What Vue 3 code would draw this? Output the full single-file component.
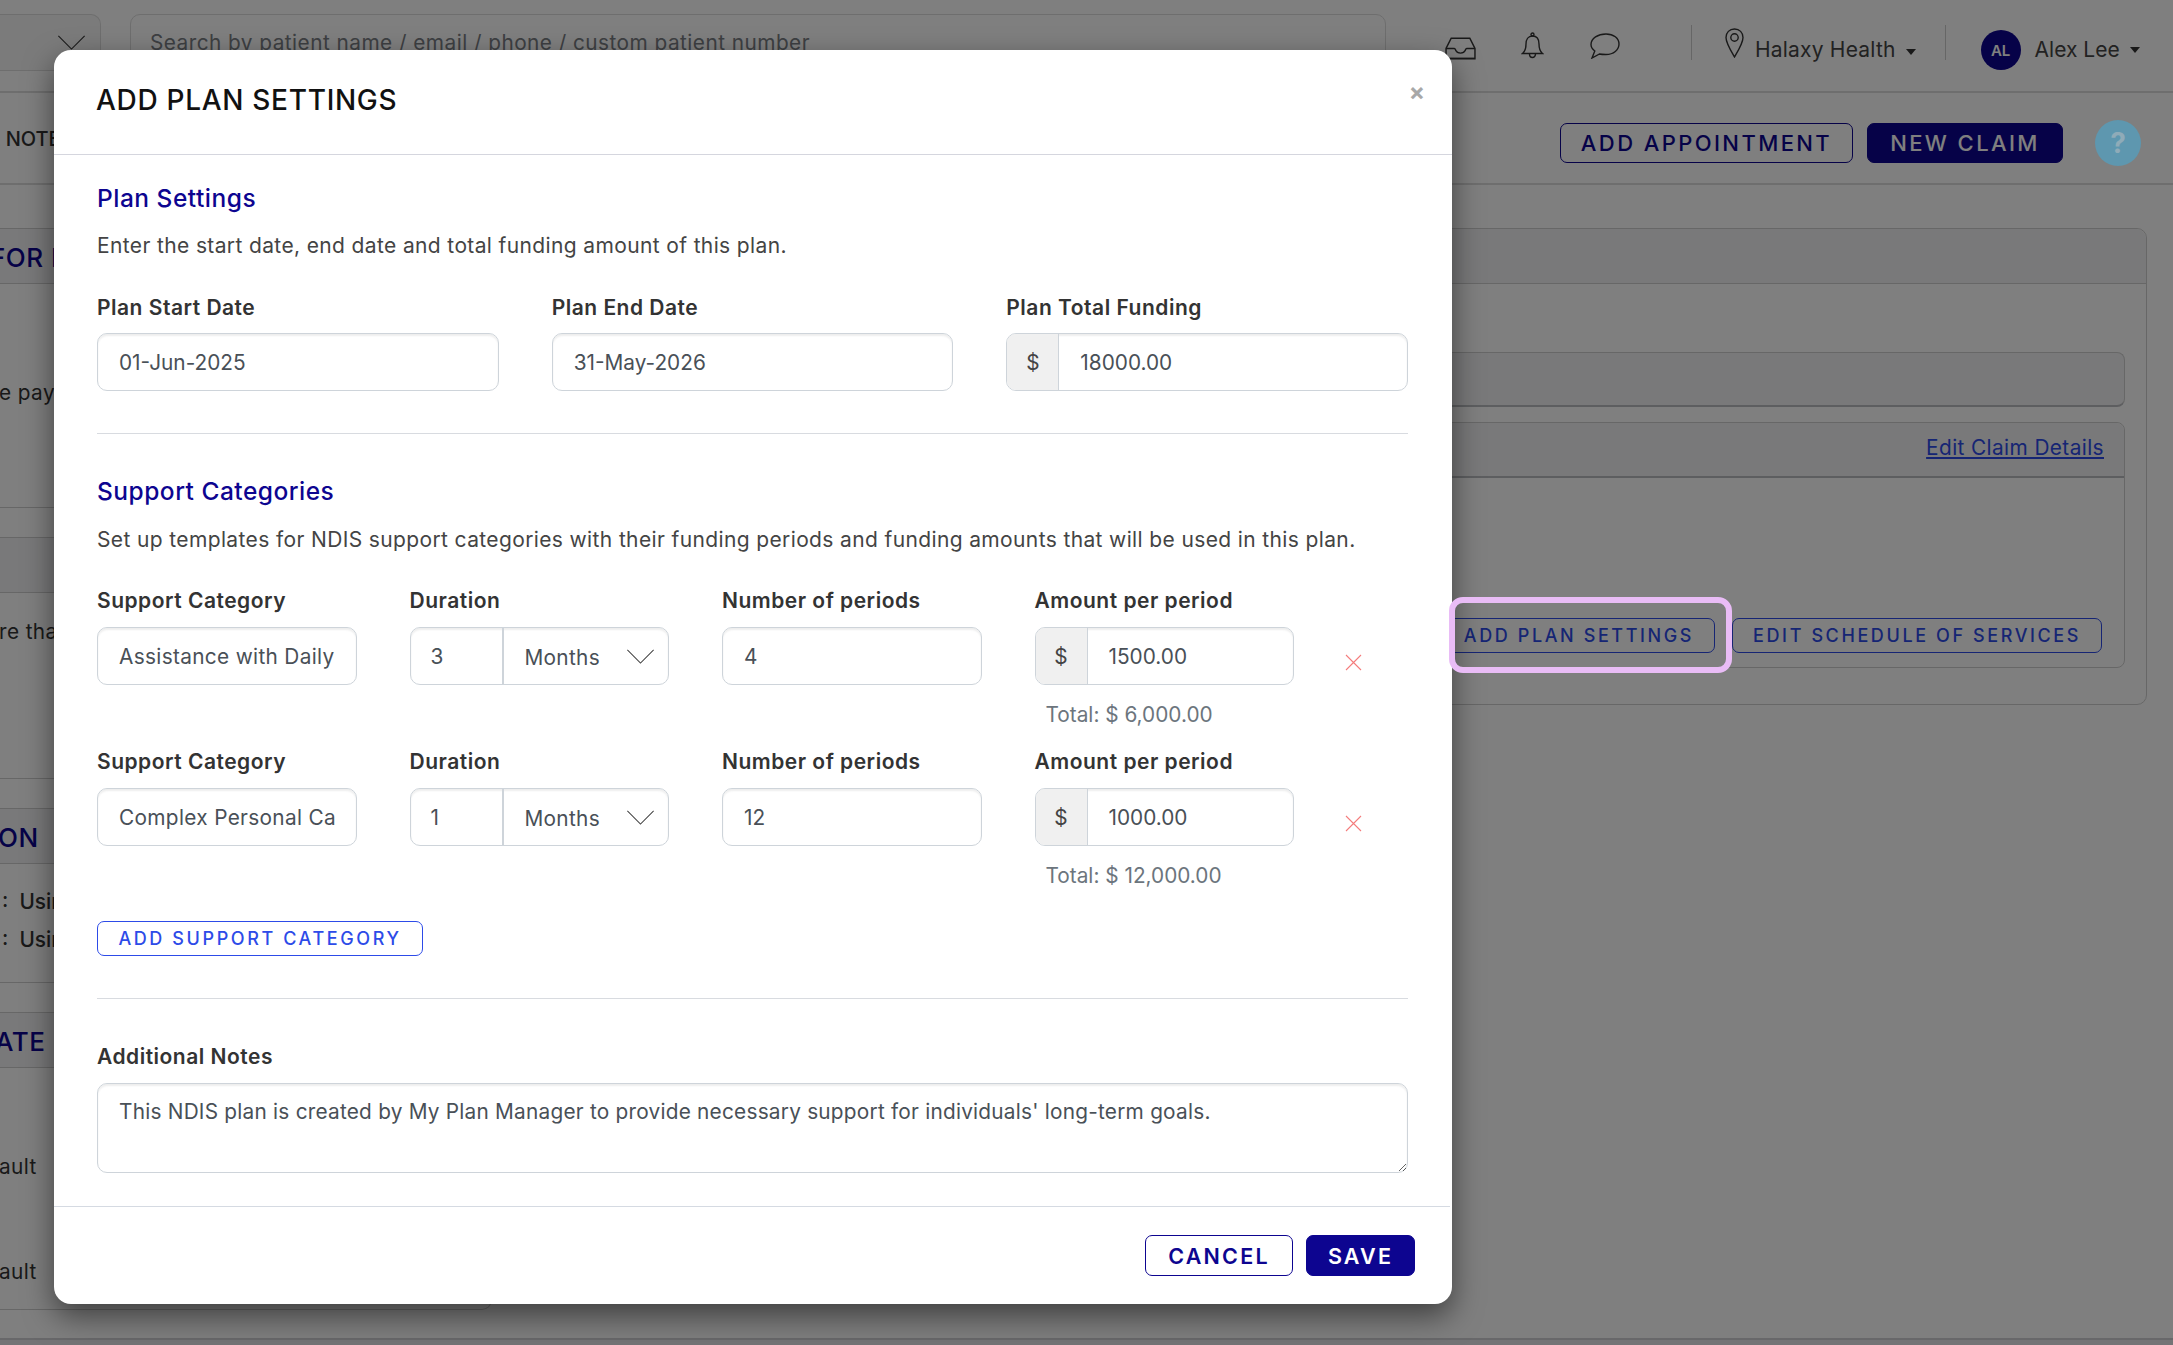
<script setup>
const dates = [
  { label: 'Plan Start Date', value: '01-Jun-2025' },
  { label: 'Plan End Date', value: '31-May-2026' }
]

const categories = [
  { name: 'Assistance with Daily', every: '3', periods: '4', amount: '1500.00', total: '6,000.00' },
  { name: 'Complex Personal Ca', every: '1', periods: '12', amount: '1000.00', total: '12,000.00' }
]
</script>

<template>
  <div class="page">
    <header class="topbar">
      <div class="menu-box">
        <svg class="chevron" viewBox="0 0 30 16"><path d="M1 1l14 14L29 1" /></svg>
      </div>
      <div class="search">Search by patient name / email / phone / custom patient number</div>
      <div class="top-icons">
        <svg class="ic-inbox" viewBox="0 0 30 22">
          <path d="M6 1h18l5 10v10H1V11z" />
          <path d="M1 11h8c1 0 1 1 1.500 2 .6 1.400 2.500 2.500 4.500 2.500s3.900-1.100 4.500-2.500c.5-1 .5-2 1.500-2h8" />
          <path d="M1 20.500h28" />
        </svg>
        <svg class="ic-bell" viewBox="0 0 22 27">
          <circle cx="11" cy="2.500" r="1.500" />
          <path d="M11 4C6.500 4 4.500 7.500 4.500 12c0 5-1 7.500-3.500 9.500h20c-2.500-2-3.500-4.500-3.500-9.500C17.500 7.500 15.500 4 11 4z" />
          <path d="M8 22a3 3.500 0 0 0 6 0" />
        </svg>
        <svg class="ic-chat" viewBox="0 0 30 26">
          <path d="M16 1C8 1 1 5 1 11.500c0 3 1.700 5 3.800 6.500L2 25l7.500-4c2 .5 4 .5 6.500.5 7.500 0 13-4.500 13-10.500S23.500 1 16 1z" />
        </svg>
      </div>
      <div class="top-sep"></div>
      <div class="clinic">
        <svg class="ic-pin" viewBox="0 0 19 30">
          <path d="M9.500 1C4.500 1 1 4.500 1 9.500 1 15 6 23 9.500 29 13 23 18 15 18 9.500 18 4.500 14.500 1 9.500 1z" />
          <circle cx="9.500" cy="9.500" r="3.700" />
        </svg>
        <span class="top-name">Halaxy Health</span>
        <span class="caret"></span>
      </div>
      <div class="top-sep second"></div>
      <div class="user">
        <span class="avatar">AL</span>
        <span class="top-name">Alex Lee</span>
        <span class="caret"></span>
      </div>
    </header>

    <nav class="subbar">
      <span class="tab-text">L NOTES</span>
      <div class="sub-actions">
        <button class="btn-big outline">ADD APPOINTMENT</button>
        <button class="btn-big solid">NEW CLAIM</button>
        <span class="help">?</span>
      </div>
    </nav>

    <div class="content">
      <aside class="left-col">
        <section class="side-card card-a">
          <h3 class="cut-f">FOR INVOICES</h3>
          <p class="para para-a">e payment</p>
        </section>
        <section class="side-card card-b">
          <h3></h3>
          <p class="para para-b">re that</p>
        </section>
        <section class="side-card card-c">
          <h3 class="cut-o">ON</h3>
          <p class="uses first">:&nbsp; Using</p>
          <p class="uses">:&nbsp; Using</p>
        </section>
        <section class="side-card card-d">
          <h3 class="cut-a">ATE PLAN</h3>
          <p class="para para-d">ault</p>
          <p class="para para-d2">ault</p>
        </section>
      </aside>

      <main class="right-card">
        <div class="right-head"></div>
        <div class="panel panel-one"></div>
        <div class="panel panel-two">
          <div class="panel-head">
            <a class="edit-link">Edit Claim Details</a>
          </div>
          <div class="panel-body">
            <button class="btn-small">ADD PLAN SETTINGS</button>
            <button class="btn-small">EDIT SCHEDULE OF SERVICES</button>
          </div>
        </div>
      </main>
    </div>

    <div class="bottom-band"></div>

    <div class="backdrop"></div>

    <div class="modal">
      <div class="modal-head">
        <h2>ADD PLAN SETTINGS</h2>
        <span class="close">×</span>
      </div>

      <div class="modal-body">
        <h4>Plan Settings</h4>
        <p class="desc">Enter the start date, end date and total funding amount of this plan.</p>

        <div class="plan-grid">
          <div v-for="d in dates" :key="d.label">
            <label>{{ d.label }}</label>
            <div class="field">{{ d.value }}</div>
          </div>
          <div>
            <label>Plan Total Funding</label>
            <div class="field group">
              <span class="addon">$</span>
              <span class="group-value">18000.00</span>
            </div>
          </div>
        </div>

        <hr class="rule" />

        <h4>Support Categories</h4>
        <p class="desc">Set up templates for NDIS support categories with their funding periods and funding amounts that will be used in this plan.</p>

        <div v-for="c in categories" :key="c.name" class="cat-row">
          <div>
            <label>Support Category</label>
            <div class="field cat-name">{{ c.name }}</div>
          </div>
          <div>
            <label>Duration</label>
            <div class="field group">
              <span class="duration-num">{{ c.every }}</span>
              <span class="duration-unit">Months</span>
              <svg class="chevron small" viewBox="0 0 30 16"><path d="M1 1l14 14L29 1" /></svg>
            </div>
          </div>
          <div>
            <label>Number of periods</label>
            <div class="field">{{ c.periods }}</div>
          </div>
          <div>
            <label>Amount per period</label>
            <div class="field group">
              <span class="addon">$</span>
              <span class="group-value">{{ c.amount }}</span>
            </div>
            <div class="total">Total: $ {{ c.total }}</div>
          </div>
          <svg class="remove" viewBox="0 0 17 17"><path d="M1 1l15 15M16 1L1 16" /></svg>
        </div>

        <button class="btn-add">ADD SUPPORT CATEGORY</button>

        <hr class="rule second" />

        <label>Additional Notes</label>
        <div class="notes">This NDIS plan is created by My Plan Manager to provide necessary support for individuals' long-term goals.</div>
      </div>

      <div class="modal-foot">
        <button class="btn-cancel">CANCEL</button>
        <button class="btn-save">SAVE</button>
      </div>
    </div>

    <div class="spotlight"></div>
  </div>
</template>

<style scoped>
.page {
  position: relative;
  width: 2173px;
  height: 1345px;
  overflow: hidden;
  background: #fff;
  font-family: Inter, "Liberation Sans", sans-serif;
  font-size: 20.8px;
  color: #444;
}

button {
  font-family: inherit;
  cursor: pointer;
}

/* top bar */
.topbar {
  display: flex;
  align-items: flex-start;
  height: 93px;
  border-bottom: 2px solid #dcdcdc;
  box-sizing: border-box;
}

.menu-box {
  display: flex;
  justify-content: flex-end;
  align-items: center;
  box-sizing: border-box;
  width: 101px;
  height: 57px;
  margin-top: 14px;
  padding: 0 14px 0 0;
  border: 1px solid #dcdcdc;
  border-left: 0;
  border-radius: 0 10px 10px 0;
  background: #f6f6f6;
}

.chevron {
  width: 29px;
  height: 15px;
  fill: none;
  stroke: #333;
  stroke-width: 1.2;
}

.search {
  box-sizing: border-box;
  width: 1256px;
  height: 57px;
  margin: 14px 0 0 29px;
  padding: 13px 19px;
  border: 1px solid #dcdcdc;
  border-radius: 10px;
  line-height: 30px;
  letter-spacing: 0.46px;
  color: #7b7f85;
}

.top-icons {
  display: flex;
  align-items: center;
  height: 27px;
  margin: 32px 0 0 59px;
}

.top-icons svg,
.ic-pin {
  fill: none;
  stroke: #333;
  stroke-width: 1.4;
}

.ic-inbox {
  width: 31px;
  height: 23px;
  margin-top: 5px;
}

.ic-bell {
  width: 23px;
  height: 27px;
  margin-left: 45px;
}

.ic-chat {
  width: 30px;
  height: 26px;
  margin-left: 46px;
}

.top-sep {
  width: 1px;
  height: 35px;
  margin: 25px 0 0 71px;
  background: #ccc;
}

.top-sep.second {
  margin-left: 29px;
}

.clinic {
  display: flex;
  align-items: flex-end;
  margin: 28px 0 0 33px;
}

.ic-pin {
  width: 19px;
  height: 30px;
}

.top-name {
  margin-left: 11px;
  font-size: 21px;
  line-height: 34px;
  letter-spacing: 0.2px;
  color: #444;
}

.clinic .top-name {
  margin-bottom: -9px;
}

.caret {
  align-self: center;
  width: 0;
  height: 0;
  margin-left: 10px;
  border: 5px solid transparent;
  border-top: 6px solid #333;
  border-bottom: 0;
}

.clinic .caret {
  align-self: flex-end;
  margin-bottom: 3px;
}

.user {
  display: flex;
  align-items: center;
  height: 40px;
  margin: 30px 0 0 35px;
}

.avatar {
  display: flex;
  align-items: center;
  justify-content: center;
  width: 40px;
  height: 40px;
  border-radius: 50%;
  background: #0d0590;
  color: #fff;
  font-size: 15px;
  font-weight: 600;
}

.user .top-name {
  margin-left: 14px;
  letter-spacing: 0;
}

/* sub bar */
.subbar {
  display: flex;
  justify-content: space-between;
  align-items: flex-start;
  box-sizing: border-box;
  height: 92px;
  padding-right: 32px;
  border-bottom: 2px solid #dcdcdc;
}

.tab-text {
  margin: 31px 0 0 -11px;
  line-height: 30px;
  font-size: 20px;
  font-weight: 500;
  color: #333;
  white-space: nowrap;
}

.sub-actions {
  display: flex;
  align-items: center;
  margin-top: 27px;
}

.btn-big {
  box-sizing: border-box;
  height: 40px;
  padding: 0;
  border: 1.5px solid #0d0590;
  border-radius: 7px;
  font-size: 22px;
  font-weight: 500;
  letter-spacing: 2.4px;
}

.btn-big.outline {
  width: 293px;
  background: transparent;
  color: #0d0590;
}

.btn-big.solid {
  width: 196px;
  margin-left: 14px;
  background: #0d0590;
  color: #fff;
}

/* chat style widget that stays above the backdrop */
.help {
  position: relative;
  z-index: 1;
  display: flex;
  align-items: center;
  justify-content: center;
  width: 46px;
  height: 46px;
  margin-left: 32px;
  border-radius: 50%;
  background: #5e97af;
  color: #8fabb8;
  font-size: 28px;
  font-weight: 700;
}

/* page content behind the dialog */
.content {
  display: flex;
  height: 1153px;
  padding: 43px 26px 0 0;
  box-sizing: border-box;
}

.left-col {
  display: flex;
  flex-direction: column;
  gap: 29px;
  flex: 0 0 492px;
  overflow: hidden;
}

.side-card {
  box-sizing: border-box;
  border: 1px solid #cfcfcf;
  border-left: 0;
  border-radius: 0 10px 10px 0;
  white-space: nowrap;
}

.side-card h3 {
  box-sizing: border-box;
  height: 55px;
  margin: 0;
  border-bottom: 1px solid #cfcfcf;
  background: #f2f2f4;
  font-size: 26px;
  font-weight: 500;
  line-height: 57px;
  letter-spacing: 0.5px;
  color: #0d0590;
}

.cut-f {
  text-indent: -10px;
}

.cut-o {
  text-indent: -2px;
}

.cut-a {
  text-indent: -5px;
}

.card-a { height: 280px; }
.card-b { height: 242px; }
.card-c { height: 175px; }
.card-d { height: 298px; }

.para {
  margin: 0;
  line-height: 30px;
  letter-spacing: 0.4px;
  color: #333;
}

.para-a { margin-top: 94px; text-indent: -1px; }
.para-b { margin-top: 24px; text-indent: -1px; }
.para-d { margin-top: 84px; text-indent: -1px; }
.para-d2 { margin-top: 75px; text-indent: -1px; }

.uses {
  margin: 0;
  padding-left: 2px;
  font-weight: 500;
  line-height: 38px;
  color: #333;
}

.uses.first {
  margin-top: 19px;
}

.right-card {
  box-sizing: border-box;
  flex: 1;
  height: 477px;
  margin-left: 20px;
  padding: 0 21px;
  border: 1px solid #cfcfcf;
  border-radius: 10px;
}

.right-head {
  height: 54px;
  margin: 0 -21px;
  border-bottom: 1px solid #cfcfcf;
  border-radius: 10px 10px 0 0;
  background: #f2f2f4;
}

.panel {
  box-sizing: border-box;
  border: 1px solid #cfcfcf;
  border-radius: 8px;
}

.panel-one {
  height: 55px;
  margin-top: 68px;
  border-bottom: 2px solid #bbbcc0;
  background: #f2f2f4;
}

.panel-two {
  display: flex;
  flex-direction: column;
  height: 246px;
  margin-top: 15px;
}

.panel-head {
  display: flex;
  justify-content: flex-end;
  align-items: center;
  box-sizing: border-box;
  height: 55px;
  padding: 0 20px 5px 0;
  border-bottom: 2px solid #bbbcc0;
  border-radius: 8px 8px 0 0;
  background: #f2f2f4;
}

.edit-link {
  font-size: 20.8px;
  letter-spacing: 0.4px;
  color: #2d4be8;
  text-decoration: underline;
}

.panel-body {
  display: flex;
  flex: 1;
  justify-content: flex-end;
  align-items: flex-end;
  gap: 17px;
  padding: 0 22px 14px 0;
}

.btn-small {
  box-sizing: border-box;
  height: 35px;
  padding: 0 20px;
  border: 1px solid #2d4be8;
  border-radius: 7px;
  background: transparent;
  color: #2d4be8;
  font-size: 18px;
  font-weight: 500;
  letter-spacing: 2.6px;
  white-space: nowrap;
}

.bottom-band {
  height: 7px;
  border-top: 2px solid #d0d0d4;
  background: #e8e8ec;
}

.backdrop {
  position: absolute;
  inset: 0;
  background: rgba(0, 0, 0, 0.5);
}

/* dialog */
.modal {
  position: absolute;
  top: 50px;
  left: 54px;
  z-index: 2;
  display: flex;
  flex-direction: column;
  box-sizing: border-box;
  width: 1398px;
  height: 1254px;
  border-radius: 17px;
  background: #fff;
  box-shadow: 0 12px 30px rgba(0, 0, 0, 0.5);
}

.modal-head {
  display: flex;
  justify-content: space-between;
  box-sizing: border-box;
  height: 105px;
  padding: 0 27px 0 42px;
  border-bottom: 1px solid #d5d6de;
}

.modal-head h2 {
  margin: 33px 0 0;
  font-size: 28px;
  font-weight: 500;
  line-height: 34px;
  letter-spacing: 0.7px;
  color: #111;
}

.close {
  margin-top: 23px;
  font-size: 24px;
  font-weight: 700;
  line-height: 38px;
  color: #a8a8a8;
}

.modal-body {
  flex: 1;
  padding: 27px 44px 0 43px;
}

.modal-body h4 {
  margin: 0;
  font-size: 24.5px;
  font-weight: 500;
  line-height: 32px;
  letter-spacing: 0.5px;
  color: #0d0590;
}

.desc {
  margin: 17px 0 0;
  font-size: 21px;
  line-height: 30px;
  letter-spacing: 0.37px;
  color: #444;
}

h4 + .desc + .cat-row {
  margin-top: 32px;
}

label {
  display: block;
  font-size: 21px;
  font-weight: 600;
  line-height: 28px;
  letter-spacing: 0.5px;
  color: #333;
}

.plan-grid {
  display: grid;
  grid-template-columns: repeat(3, 1fr);
  gap: 53px;
  margin-top: 33px;
}

.field {
  box-sizing: border-box;
  display: flex;
  align-items: center;
  height: 58px;
  margin-top: 11px;
  padding: 0 21px;
  border: 1px solid #ced4da;
  border-radius: 10px;
  box-shadow: inset 0 2px 2px rgba(0, 0, 0, 0.07);
  color: #495057;
  white-space: nowrap;
  overflow: hidden;
}

.field.group {
  padding: 0;
}

.field.cat-name {
  letter-spacing: 0.33px;
}

.addon {
  display: flex;
  align-items: center;
  justify-content: center;
  flex: 0 0 51px;
  height: 100%;
  border-right: 1px solid #ced4da;
  background: #f0f0f0;
  color: #444;
}

.group-value {
  padding-left: 21px;
}

.rule {
  height: 1px;
  margin: 42px 0 41px;
  border: 0;
  background: #d8dbe0;
}

.rule.second {
  margin: 42px 0 44px;
}

.rule + h4 + .desc {
  margin-top: 18px;
}

.cat-row {
  display: grid;
  grid-template-columns: repeat(4, 259.5px) 1fr;
  column-gap: 53px;
  height: 143px;
  margin-bottom: 18px;
}

.cat-row .field {
  margin-top: 12px;
}

.duration-num {
  display: flex;
  align-items: center;
  box-sizing: border-box;
  flex: 0 0 93px;
  height: 100%;
  padding-left: 20px;
  border-right: 2px solid #ced4da;
}

.duration-unit {
  flex: 1;
  padding: 2px 0 0 21px;
  letter-spacing: 0.3px;
}

.chevron.small {
  flex: 0 0 29px;
  margin-right: 13px;
  stroke: #444;
  stroke-width: 1.1;
}

.total {
  margin: 15px 0 0 11px;
  line-height: 30px;
  color: #6c757d;
}

.remove {
  width: 17px;
  height: 17px;
  margin: 67px 0 0 -2px;
  fill: none;
  stroke: #f47c7c;
  stroke-width: 1.1;
}

.btn-add {
  display: block;
  box-sizing: border-box;
  width: 326px;
  height: 35px;
  margin-top: 30px;
  padding: 0;
  border: 1px solid #2d4be8;
  border-radius: 7px;
  background: #fff;
  color: #2d4be8;
  font-size: 18px;
  font-weight: 500;
  letter-spacing: 2.6px;
}

.notes {
  box-sizing: border-box;
  height: 90px;
  margin-top: 12px;
  padding: 13px 21px;
  border: 1px solid #ced4da;
  border-radius: 10px;
  box-shadow: inset 0 2px 2px rgba(0, 0, 0, 0.07);
  line-height: 30px;
  letter-spacing: 0.23px;
  color: #495057;
  overflow: auto;
  resize: vertical;
}

.modal-foot {
  display: flex;
  justify-content: flex-end;
  gap: 13px;
  box-sizing: border-box;
  height: 98px;
  margin-right: 2px;
  padding: 28px 35px 0 0;
  border-top: 1px solid #d5dae2;
}

.btn-cancel,
.btn-save {
  box-sizing: border-box;
  height: 41px;
  padding: 0;
  border: 1.5px solid #0d0590;
  border-radius: 7px;
  font-size: 21.5px;
  font-weight: 600;
  letter-spacing: 2.2px;
}

.btn-cancel {
  width: 148px;
  background: #fff;
  color: #0d0590;
}

.btn-save {
  width: 109px;
  background: #0d0590;
  color: #fff;
}

/* highlight drawn on top of the screenshot */
.spotlight {
  position: absolute;
  top: 597px;
  left: 1449px;
  z-index: 3;
  box-sizing: border-box;
  width: 283px;
  height: 76px;
  border: 6px solid #e9bcf6;
  border-radius: 14px;
}
</style>

<style>
body {
  margin: 0;
  background: #fff;
}
</style>
